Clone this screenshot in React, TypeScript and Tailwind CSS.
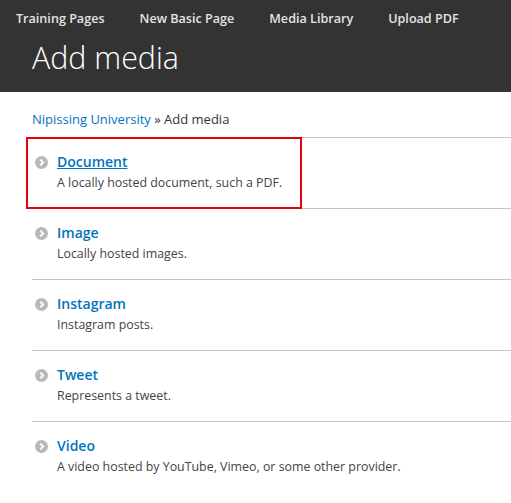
const nav = ["Training Pages", "New Basic Page", "Media Library", "Upload PDF"];

const types = [
  { name: "Document", desc: "A locally hosted document, such a PDF.", focused: true },
  { name: "Image", desc: "Locally hosted images." },
  { name: "Instagram", desc: "Instagram posts." },
  { name: "Tweet", desc: "Represents a tweet." },
  { name: "Video", desc: "A video hosted by YouTube, Vimeo, or some other provider." },
];

function Chevron() {
  return (
    <svg width="13" height="13" viewBox="0 0 13 13" className="shrink-0">
      <circle cx="6.5" cy="6.5" r="6.5" fill="#b8b8b8" />
      <path d="M5.3 3.6 L8.1 6.5 L5.3 9.4" fill="none" stroke="#fff" strokeWidth="2" />
    </svg>
  );
}

export default function App() {
  return (
    <div className="min-h-screen bg-white font-['Open_Sans',sans-serif] text-[#333]">
      <header className="bg-[#333333] pb-[16px]">
        <nav className="flex h-[38px] items-center gap-[35px] px-4 text-[12.6px] font-semibold text-[#e4e4e4]">
          {nav.map((n) => (
            <span key={n}>{n}</span>
          ))}
        </nav>
        <h1 className="px-8 pt-[2px] text-[30.4px] font-light leading-[36px] text-white">Add media</h1>
      </header>

      <div className="pl-8">
        <div className="pb-[8px] pt-[17px] text-[13px] leading-[20px]">
          <a className="text-[#0074bd]">Nipissing University</a> » Add media
        </div>
        <ul className="border-t border-[#c4c4c4]">
          {types.map((t) => (
            <li key={t.name} className="relative border-b border-[#c4c4c4] py-[14px] last:border-b-0">
              {t.focused && (
                <div className="absolute -top-px bottom-[-1px] left-[-6px] w-[276px] border-2 border-[#e3000f]" />
              )}
              <div className="flex items-center gap-[9px] pl-[3px]">
                <Chevron />
                <span
                  className={`text-[14px] font-semibold leading-[20px] text-[#0074bd] ${t.focused ? "underline" : ""}`}
                >
                  {t.name}
                </span>
              </div>
              <div className="pl-[25px] text-[12.4px] leading-[22px] text-[#444]">{t.desc}</div>
            </li>
          ))}
        </ul>
      </div>
    </div>
  );
}
